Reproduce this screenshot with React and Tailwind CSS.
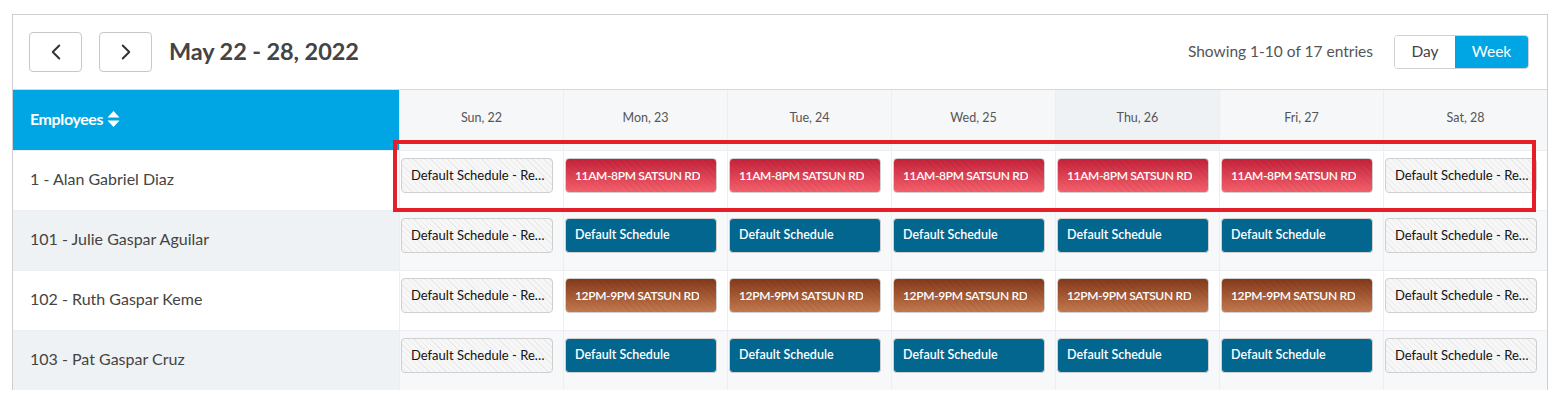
import { ChevronLeft, ChevronRight } from "lucide-react";

const days = ["Sun, 22", "Mon, 23", "Tue, 24", "Wed, 25", "Thu, 26", "Fri, 27", "Sat, 28"];

const rows = [
  { name: "1 - Alan Gabriel Diaz", kind: "red", label: "11AM-8PM SATSUN RD" },
  { name: "101 - Julie Gaspar Aguilar", kind: "blue", label: "Default Schedule" },
  { name: "102 - Ruth Gaspar Keme", kind: "brown", label: "12PM-9PM SATSUN RD" },
  { name: "103 - Pat Gaspar Cruz", kind: "blue", label: "Default Schedule" },
];

const chipStyles = {
  rest: "border border-[#cfcfcf] text-[#111] font-normal text-[13px] bg-[image:repeating-linear-gradient(45deg,#f7f7f7_0px,#f7f7f7_3px,#ebebeb_3px,#ebebeb_4px)]",
  red: "border border-[#d0d0d0] text-white font-semibold text-[12px] tracking-[-0.35px] bg-[image:repeating-linear-gradient(45deg,rgba(0,0,0,0.05)_0px,rgba(0,0,0,0.05)_1px,transparent_1px,transparent_5px),linear-gradient(to_bottom,#c4223a,#f4606c)]",
  brown: "border border-[#d0d0d0] text-white font-semibold text-[12px] tracking-[-0.35px] bg-[image:repeating-linear-gradient(45deg,rgba(0,0,0,0.05)_0px,rgba(0,0,0,0.05)_1px,transparent_1px,transparent_5px),linear-gradient(to_bottom,#843a1a,#c3784e)]",
  blue: "border border-[#d0d0d0] text-white font-semibold text-[12.5px] bg-[#03668f]",
};

const Chip = ({ kind, label }) => (
  <div
    className={`mt-[7px] ml-px w-[152px] h-[35px] rounded-[4px] flex items-center pl-[9px] pr-[6px] whitespace-nowrap overflow-hidden ${chipStyles[kind]}`}
  >
    <span className="truncate">{label}</span>
  </div>
);

const SortIcon = () => (
  <svg width="13" height="18" viewBox="0 0 13 18" className="ml-1">
    <path d="M6.5 1 L12.5 7.5 H0.5 Z" fill="white" />
    <path d="M6.5 17 L12.5 10.5 H0.5 Z" fill="white" />
  </svg>
);

export default function App() {
  return (
    <div className="bg-white w-[1563px] h-[409px] pt-[14px] pl-3 font-['Lato','Open_Sans',sans-serif] relative">
      <div className="w-[1536px] border-l border-r border-t border-[#cfcfcf]">
        {/* Toolbar */}
        <div className="h-[75px] flex items-center px-4 border-b border-[#d8d8d8]">
          <button className="w-[53px] h-[40px] border border-[#c8c8c8] rounded-[4px] flex items-center justify-center text-[#333]">
            <ChevronLeft size={26} strokeWidth={1.8} />
          </button>
          <button className="ml-[17px] w-[53px] h-[40px] border border-[#c8c8c8] rounded-[4px] flex items-center justify-center text-[#333]">
            <ChevronRight size={26} strokeWidth={1.8} />
          </button>
          <h1 className="ml-[17px] text-[23.5px] font-bold text-[#444] tracking-[-0.1px]">
            May 22 - 28, 2022
          </h1>
          <div className="ml-auto flex items-center">
            <span className="text-[15.5px] text-[#555]">Showing 1-10 of 17 entries</span>
            <div className="ml-[21px] mr-[2px] flex h-[34px] border border-[#d0d0d0] rounded-[4px] overflow-hidden text-[15.5px]">
              <div className="w-[60px] flex items-center justify-center bg-white text-[#444]">Day</div>
              <div className="w-[73px] flex items-center justify-center bg-[#00a5e3] text-white">Week</div>
            </div>
          </div>
        </div>

        {/* Grid */}
        <div className="grid grid-cols-[386px_repeat(7,164px)]">
          <div className="h-[60px] bg-[#00a5e3] flex items-center pl-[17px] pb-[2px] text-white font-bold text-[16px] tracking-[-0.4px]">
            Employees
            <SortIcon />
          </div>
          {days.map((d, i) => (
            <div
              key={d}
              className={`h-[60px] flex items-center justify-center pb-[4px] text-[12.5px] text-[#555] border-l border-[#eceef1] ${
                i === 4 ? "bg-[#eff2f5]" : "bg-[#f6f7f9]"
              }`}
            >
              {d}
            </div>
          ))}

          {rows.map((r, ri) => {
            const odd = ri % 2 === 1;
            return [
              <div
                key={r.name}
                className={`h-[60px] flex items-center pl-[17px] pb-[3px] text-[16px] text-[#444] border-t border-[#eceef1] ${
                  odd ? "bg-[#eff2f5]" : "bg-white"
                }`}
              >
                {r.name}
              </div>,
              ...days.map((d, di) => {
                const edge = di === 0 || di === 6;
                return (
                  <div
                    key={r.name + d}
                    className={`h-[60px] border-t border-l border-[#eceef1] ${odd ? "bg-[#f6f8fa]" : "bg-white"}`}
                  >
                    {edge ? (
                      <Chip kind="rest" label="Default Schedule - Rest Day" />
                    ) : (
                      <Chip kind={r.kind} label={r.label} />
                    )}
                  </div>
                );
              }),
            ];
          })}
        </div>
      </div>

      {/* Highlight annotation */}
      <div className="absolute left-[393px] top-[140px] w-[1143px] h-[72px] border-4 border-[#e61e28] pointer-events-none" />
    </div>
  );
}
